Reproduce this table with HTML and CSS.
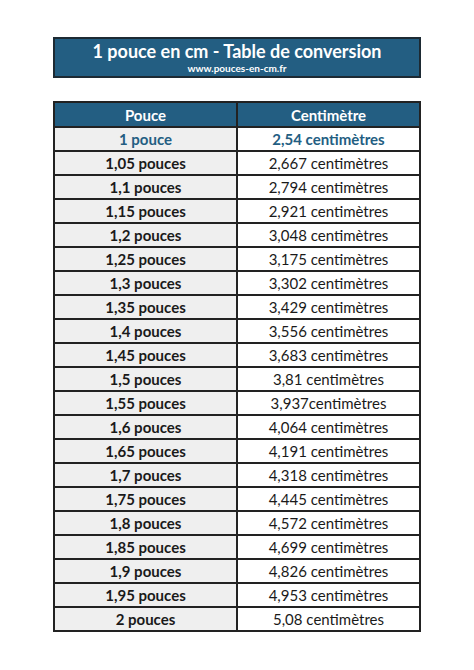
FILE: index.html
```html
<!DOCTYPE html>
<html lang="fr">
<head>
<meta charset="utf-8">
<title>1 pouce en cm - Table de conversion</title>
<link rel="stylesheet" href="styles.css">
</head>
<body>
<div class="page">
  <header class="title-box">
    <h1 class="title">1 pouce en cm - Table de conversion</h1>
    <div class="url">www.pouces-en-cm.fr</div>
  </header>
  <table class="conv">
    <thead>
      <tr><th>Pouce</th><th>Centimètre</th></tr>
    </thead>
    <tbody>
      <tr class="first"><td>1 pouce</td><td>2,54 centimètres</td></tr>
      <tr><td>1,05 pouces</td><td>2,667 centimètres</td></tr>
      <tr><td>1,1 pouces</td><td>2,794 centimètres</td></tr>
      <tr><td>1,15 pouces</td><td>2,921 centimètres</td></tr>
      <tr><td>1,2 pouces</td><td>3,048 centimètres</td></tr>
      <tr><td>1,25 pouces</td><td>3,175 centimètres</td></tr>
      <tr><td>1,3 pouces</td><td>3,302 centimètres</td></tr>
      <tr><td>1,35 pouces</td><td>3,429 centimètres</td></tr>
      <tr><td>1,4 pouces</td><td>3,556 centimètres</td></tr>
      <tr><td>1,45 pouces</td><td>3,683 centimètres</td></tr>
      <tr><td>1,5 pouces</td><td>3,81 centimètres</td></tr>
      <tr><td>1,55 pouces</td><td>3,937centimètres</td></tr>
      <tr><td>1,6 pouces</td><td>4,064 centimètres</td></tr>
      <tr><td>1,65 pouces</td><td>4,191 centimètres</td></tr>
      <tr><td>1,7 pouces</td><td>4,318 centimètres</td></tr>
      <tr><td>1,75 pouces</td><td>4,445 centimètres</td></tr>
      <tr><td>1,8 pouces</td><td>4,572 centimètres</td></tr>
      <tr><td>1,85 pouces</td><td>4,699 centimètres</td></tr>
      <tr><td>1,9 pouces</td><td>4,826 centimètres</td></tr>
      <tr><td>1,95 pouces</td><td>4,953 centimètres</td></tr>
      <tr><td>2 pouces</td><td>5,08 centimètres</td></tr>
    </tbody>
  </table>
</div>
</body>
</html>
```
FILE: styles.css
```css
html, body {
  margin: 0;
  padding: 0;
  background: #ffffff;
}
body {
  font-family: Lato, "Liberation Sans", sans-serif;
  color: #1a1a1a;
}
.page {
  width: 368px;
  margin-left: 53px;
  padding-top: 37px;
}
.title-box {
  box-sizing: border-box;
  height: 41px;
  background: #235e82;
  border: 2px solid #1d2a33;
  color: #ffffff;
  text-align: center;
  padding-top: 1px;
}
.title {
  margin: 0;
  font-size: 18px;
  font-weight: 700;
  line-height: 22px;
}
.url {
  font-size: 10px;
  font-weight: 700;
  line-height: 12px;
}
.conv {
  margin-top: 23px;
  width: 368px;
  border-collapse: collapse;
  table-layout: fixed;
  border: 2px solid #222222;
}
.conv th, .conv td {
  border: 2px solid #222222;
  text-align: center;
  padding: 0;
  font-size: 15px;
  line-height: 20px;
}
.conv th {
  background: #235e82;
  color: #ffffff;
  font-weight: 700;
  height: 23px;
}
.conv td {
  height: 22px;
}
.conv td:first-child {
  background: #efefef;
  font-weight: 700;
}
.conv td:last-child {
  background: #ffffff;
}
.conv tr.first td {
  color: #235e82;
  font-weight: 700;
}
```
